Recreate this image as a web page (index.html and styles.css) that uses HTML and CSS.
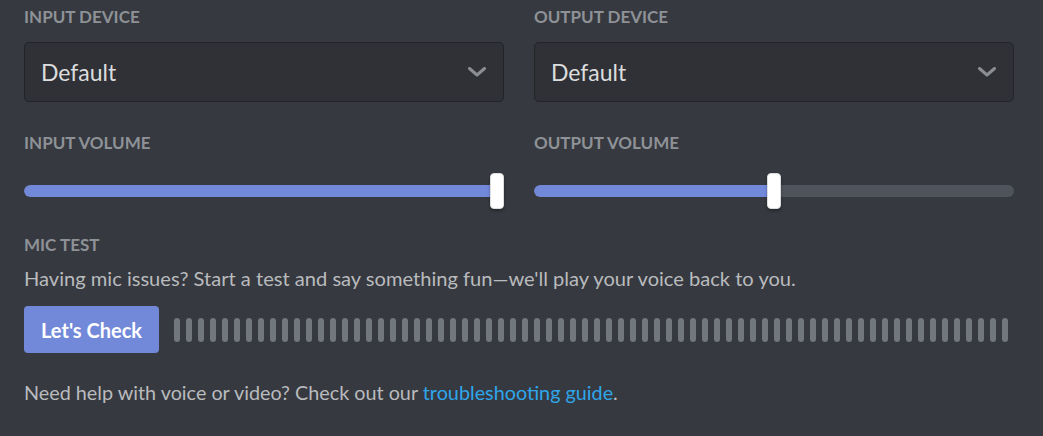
FILE: index.html
```html
<!DOCTYPE html>
<html>
<head>
<meta charset="utf-8">
<link rel="stylesheet" href="styles.css">
</head>
<body>
<div class="page">
  <div class="grid">
    <div class="col">
      <div class="label">Input Device</div>
      <div class="select">
        <span class="select-value">Default</span>
        <svg class="chevron" width="18" height="10" viewBox="0 0 18 10"><polyline points="1.5,1.5 9,8 16.5,1.5" fill="none" stroke="currentColor" stroke-width="3" stroke-linecap="round" stroke-linejoin="round"/></svg>
      </div>
      <div class="label label-vol">Input Volume</div>
      <div class="slider">
        <div class="track"><div class="fill" style="width:100%"></div></div>
        <div class="grabber" style="left:calc((100% - 14px) * 1)"></div>
      </div>
    </div>
    <div class="col">
      <div class="label">Output Device</div>
      <div class="select">
        <span class="select-value">Default</span>
        <svg class="chevron" width="18" height="10" viewBox="0 0 18 10"><polyline points="1.5,1.5 9,8 16.5,1.5" fill="none" stroke="currentColor" stroke-width="3" stroke-linecap="round" stroke-linejoin="round"/></svg>
      </div>
      <div class="label label-vol">Output Volume</div>
      <div class="slider">
        <div class="track"><div class="fill" style="width:50%"></div></div>
        <div class="grabber" style="left:calc((100% - 14px) * 0.5)"></div>
      </div>
    </div>
  </div>
  <div class="label label-mic">Mic Test</div>
  <div class="desc">Having mic issues? Start a test and say something fun—we'll play your voice back to you.</div>
  <div class="mic-row">
    <button class="btn">Let's Check</button>
    <div class="meter">
      <span></span><span></span><span></span><span></span><span></span><span></span><span></span><span></span><span></span><span></span>
      <span></span><span></span><span></span><span></span><span></span><span></span><span></span><span></span><span></span><span></span>
      <span></span><span></span><span></span><span></span><span></span><span></span><span></span><span></span><span></span><span></span>
      <span></span><span></span><span></span><span></span><span></span><span></span><span></span><span></span><span></span><span></span>
      <span></span><span></span><span></span><span></span><span></span><span></span><span></span><span></span><span></span><span></span>
      <span></span><span></span><span></span><span></span><span></span><span></span><span></span><span></span><span></span><span></span>
      <span></span><span></span><span></span><span></span><span></span><span></span><span></span><span></span><span></span><span></span>
    </div>
  </div>
  <div class="help">Need help with voice or video? Check out our <a class="link" href="#">troubleshooting guide</a>.</div>
</div>
</body>
</html>
```

FILE: styles.css
```css
html, body {
  margin: 0;
  padding: 0;
  background: #36393f;
  height: 100%;
}
body {
  font-family: Lato, "Noto Sans", sans-serif;
  overflow: hidden;
}
.page {
  padding: 7px 29px 0 24px;
}
.grid {
  display: grid;
  grid-template-columns: 480px 480px;
  column-gap: 30px;
}
.label {
  font-size: 17px;
  line-height: 20px;
  font-weight: 700;
  text-transform: uppercase;
  color: #8e9297;
  height: 20px;
}
.select {
  margin-top: 15px;
  box-sizing: border-box;
  height: 60px;
  background: #2f3136;
  border: 1px solid #232428;
  border-radius: 5px;
  display: flex;
  align-items: center;
  justify-content: space-between;
  padding: 0 17px 0 16px;
}
.select-value {
  color: #dcddde;
  font-size: 23px;
  line-height: 28px;
}
.chevron {
  color: #8a8d92;
  display: block;
}
.label-vol {
  margin-top: 31px;
}
.slider {
  position: relative;
  margin-top: 20px;
  height: 36px;
  display: flex;
  align-items: center;
}
.track {
  width: 100%;
  height: 12px;
  border-radius: 6px;
  background: #4f545c;
  overflow: hidden;
}
.fill {
  height: 100%;
  background: #7289da;
  border-radius: 6px;
}
.grabber {
  position: absolute;
  top: 0;
  box-sizing: border-box;
  width: 14px;
  height: 36px;
  background: #ffffff;
  border: 1px solid #dcddde;
  border-radius: 4px;
  box-shadow: 0 2px 3px rgba(0,0,0,0.3);
}
.label-mic {
  margin-top: 26px;
}
.desc {
  margin-top: 9px;
  font-size: 20.1px;
  line-height: 28px;
  color: #b9bbbe;
}
.mic-row {
  margin-top: 14px;
  display: flex;
  align-items: center;
  gap: 15px;
}
.btn {
  height: 47px;
  padding: 0 17px;
  background: #7289da;
  color: #ffffff;
  border: none;
  border-radius: 4px;
  font-family: Lato, "Noto Sans", sans-serif;
  font-size: 20px;
  font-weight: 700;
}
.meter {
  display: flex;
  gap: 6px;
}
.meter span {
  width: 6px;
  height: 24px;
  border-radius: 3px;
  background: #72767d;
}
.help {
  margin-top: 25px;
  font-size: 19.8px;
  line-height: 28px;
  color: #b9bbbe;
}
.link {
  color: #2fa6eb;
  text-decoration: none;
}
```
